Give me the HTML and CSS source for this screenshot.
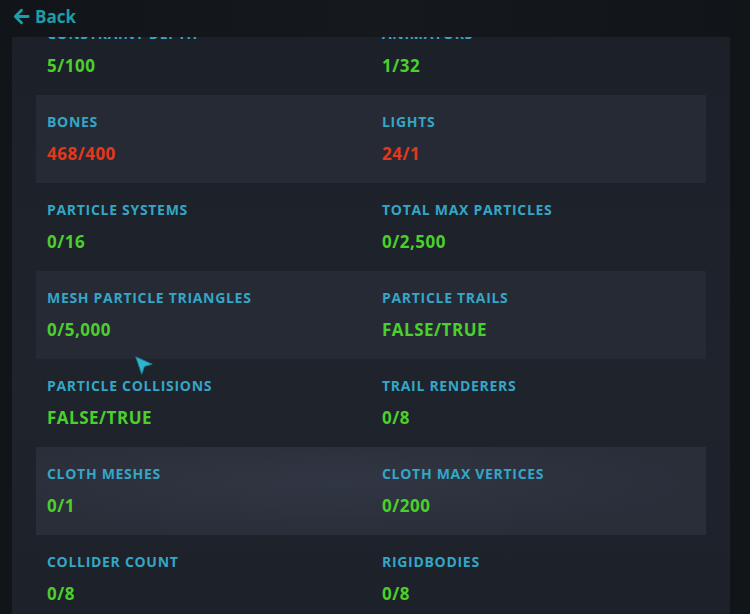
FILE: index.html
```html
<!DOCTYPE html>
<html lang="en">
<head>
    <meta charset="UTF-8">
    <title>Avatar Performance Stats</title>
    <link rel="stylesheet" href="styles.css">
</head>
<body>
    <header class="topbar">
        <a class="back-link" href="#">
            <svg class="back-icon" viewBox="0 0 20 20" width="19" height="19">
                <path d="M17 10H4M10 3.5L3.5 10L10 16.5" fill="none" stroke="currentColor" stroke-width="3" stroke-linecap="round" stroke-linejoin="round"/>
            </svg>
            <span>Back</span>
        </a>
    </header>
    <main class="stats-panel">
        <div class="stats-list">
            <div class="stat-row">
                <div class="stat"><div class="stat-label">Constraint Depth</div><div class="stat-value ok">5/100</div></div>
                <div class="stat"><div class="stat-label">Animators</div><div class="stat-value ok">1/32</div></div>
            </div>
            <div class="stat-row">
                <div class="stat"><div class="stat-label">Bones</div><div class="stat-value over">468/400</div></div>
                <div class="stat"><div class="stat-label">Lights</div><div class="stat-value over">24/1</div></div>
            </div>
            <div class="stat-row">
                <div class="stat"><div class="stat-label">Particle Systems</div><div class="stat-value ok">0/16</div></div>
                <div class="stat"><div class="stat-label">Total Max Particles</div><div class="stat-value ok">0/2,500</div></div>
            </div>
            <div class="stat-row">
                <div class="stat"><div class="stat-label">Mesh Particle Triangles</div><div class="stat-value ok">0/5,000</div></div>
                <div class="stat"><div class="stat-label">Particle Trails</div><div class="stat-value ok">FALSE/TRUE</div></div>
            </div>
            <div class="stat-row">
                <div class="stat"><div class="stat-label">Particle Collisions</div><div class="stat-value ok">FALSE/TRUE</div></div>
                <div class="stat"><div class="stat-label">Trail Renderers</div><div class="stat-value ok">0/8</div></div>
            </div>
            <div class="stat-row">
                <div class="stat"><div class="stat-label">Cloth Meshes</div><div class="stat-value ok">0/1</div></div>
                <div class="stat"><div class="stat-label">Cloth Max Vertices</div><div class="stat-value ok">0/200</div></div>
            </div>
            <div class="stat-row">
                <div class="stat"><div class="stat-label">Collider Count</div><div class="stat-value ok">0/8</div></div>
                <div class="stat"><div class="stat-label">Rigidbodies</div><div class="stat-value ok">0/8</div></div>
            </div>
        </div>
    </main>
    <svg class="pointer" viewBox="0 0 24 24" width="22" height="22">
        <path d="M3 2L21 10L12.5 12.5L9.5 21Z" fill="#2fb4cf" stroke="#1a7f95" stroke-width="1" stroke-linejoin="round"/>
    </svg>
</body>
</html>
```

FILE: styles.css
```css
* {
    margin: 0;
    padding: 0;
    box-sizing: border-box;
}
html, body {
    height: 100%;
}
body {
    font-family: 'Open Sans', 'Noto Sans', sans-serif;
    background: linear-gradient(90deg, #111418, #15181d 50%, #111418);
    color: #d9e1e8;
    overflow: hidden;
    display: flex;
    flex-direction: column;
}
.topbar {
    height: 37px;
    padding: 0 12px;
    display: flex;
    align-items: center;
}
.back-link {
    display: flex;
    align-items: center;
    gap: 4px;
    color: #1c9ea6;
    text-decoration: none;
    font-size: 17px;
    font-weight: 700;
    margin-top: -4px;
}
.back-icon {
    display: block;
}
.stats-panel {
    flex: 1;
    margin: 0 20px 0 12px;
    background: linear-gradient(180deg, #1c2129, #1f232c 60%, #1d2129);
    overflow: hidden;
    padding: 0 24px;
}
/* list is scrolled a little past the first row */
.stats-list {
    margin-top: -30px;
}
.stat-row {
    display: grid;
    grid-template-columns: 1fr 1fr;
    height: 88px;
}
.stat-row:nth-child(even) {
    background: #262a34;
}
.stat-row:nth-child(6) {
    background: radial-gradient(ellipse at 45% 40%, #313644, #2a2e39 70%);
}
.stat {
    padding: 17px 0 0 11px;
}
.stat-label {
    font-size: 14px;
    font-weight: 700;
    text-transform: uppercase;
    letter-spacing: 0.7px;
    color: #34a6c6;
    line-height: 20px;
}
.stat-value {
    margin-top: 10px;
    font-size: 17px;
    font-weight: 700;
    line-height: 24px;
    letter-spacing: 0.5px;
}
.stat-value.ok {
    color: #4bcf2c;
}
.stat-value.over {
    color: #e2381c;
}
.pointer {
    position: absolute;
    left: 133px;
    top: 355px;
}
```
